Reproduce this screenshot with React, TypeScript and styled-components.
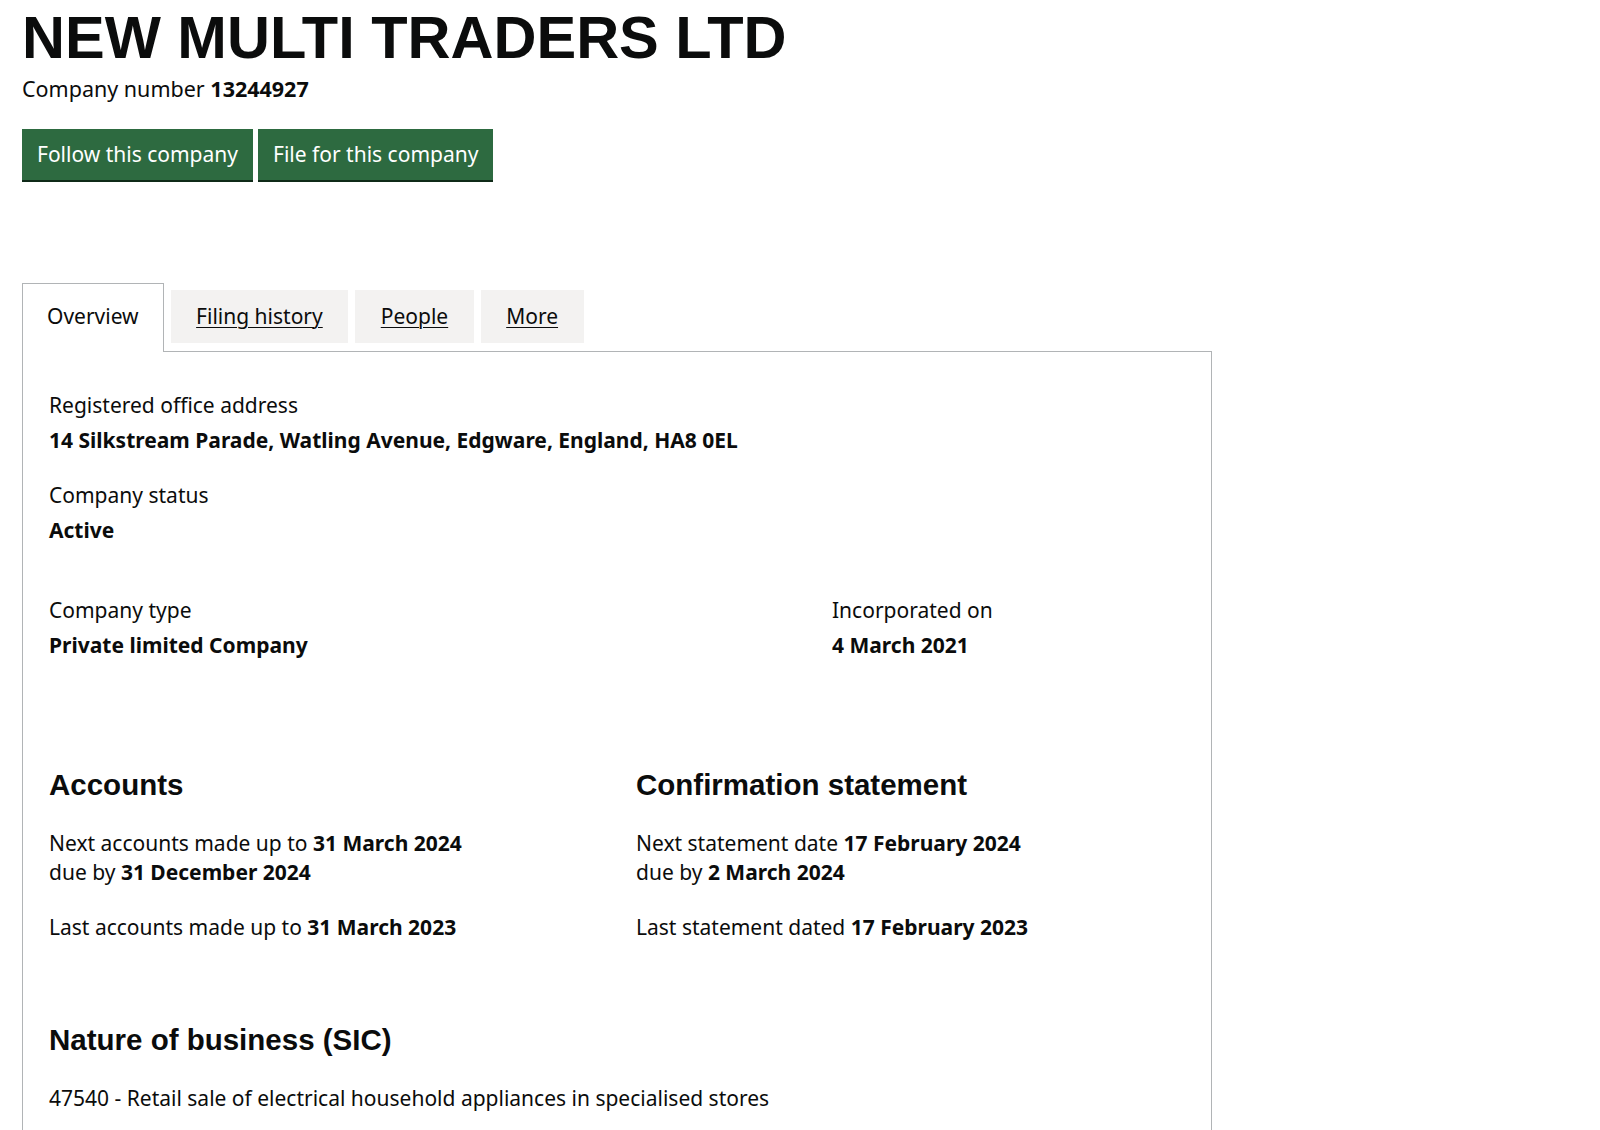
import styled, { createGlobalStyle } from 'styled-components';

const GlobalStyle = createGlobalStyle`
  body {
    margin: 0;
    background: #ffffff;
    color: #0b0c0c;
    font-family: 'Noto Sans', 'Open Sans', Arial, sans-serif;
  }
`;

const Page = styled.div`
  padding: 0 22px;
`;

const Title = styled.h1`
  margin: 8px 0 0;
  font-family: 'Liberation Sans', Arial, sans-serif;
  font-weight: 700;
  font-size: 59.5px;
  line-height: 1;
`;

const CompanyNumber = styled.p`
  margin: 8px 0 0;
  font-size: 21.5px;
  line-height: 25px;

  strong {
    font-weight: 700;
  }
`;

const ButtonRow = styled.div`
  display: flex;
  gap: 5px;
  margin-top: 28px;
`;

const GreenButton = styled.button`
  font-family: inherit;
  font-size: 21px;
  line-height: 25px;
  padding: 13px 15px;
  color: #ffffff;
  background: #2d6a40;
  border: none;
  border-radius: 0;
  box-shadow: 0 2px 0 #0f2a18;
  cursor: pointer;
`;

const TabList = styled.ul`
  display: flex;
  align-items: flex-start;
  list-style: none;
  margin: 103px 0 -1px;
  padding: 0;
  width: 1190px;
`;

const Tab = styled.li<{ $active?: boolean }>`
  position: relative;
  z-index: 1;
  font-size: 21px;
  line-height: 25px;
  margin-right: 7px;
  ${({ $active }) =>
    $active
      ? `
    background: #ffffff;
    border: 1px solid #b1b4b6;
    border-bottom: none;
    padding: 20px 24px 23px;
  `
      : `
    background: #f3f2f1;
    margin-top: 7px;
    padding: 14px 25.5px;
  `}
`;

const TabLink = styled.a`
  color: #0b0c0c;
  text-decoration: underline;
  text-underline-offset: 3px;
  text-decoration-thickness: 1px;
`;

const Panel = styled.div`
  width: 1190px;
  box-sizing: border-box;
  border: 1px solid #b1b4b6;
  padding: 41px 26px 60px;
`;

const Field = styled.dl<{ $after?: number }>`
  margin: 0 0 ${({ $after }) => $after ?? 30}px;
`;

const Label = styled.dt`
  font-size: 21px;
  line-height: 25px;
  margin-bottom: 10px;
`;

const Value = styled.dd`
  margin: 0;
  font-size: 21px;
  line-height: 25px;
  font-weight: 700;
`;

const Columns = styled.div<{ $first: string; $after?: number }>`
  display: grid;
  grid-template-columns: ${({ $first }) => $first} 1fr;
  margin-bottom: ${({ $after }) => $after ?? 0}px;
`;

const Heading = styled.h2`
  margin: 0 0 27px;
  font-family: 'Liberation Sans', Arial, sans-serif;
  font-weight: 700;
  font-size: 29.5px;
  line-height: 35px;
`;

const Text = styled.p<{ $after?: number }>`
  margin: 0 0 ${({ $after }) => $after ?? 0}px;
  font-size: 21px;
  line-height: 29px;

  strong {
    font-weight: 700;
  }
`;

const App = () => {
  return (
    <>
      <GlobalStyle />
      <Page>
        <Title>NEW MULTI TRADERS LTD</Title>
        <CompanyNumber>
          Company number <strong>13244927</strong>
        </CompanyNumber>
        <ButtonRow>
          <GreenButton>Follow this company</GreenButton>
          <GreenButton>File for this company</GreenButton>
        </ButtonRow>

        <TabList>
          <Tab $active>Overview</Tab>
          <Tab>
            <TabLink href="#">Filing history</TabLink>
          </Tab>
          <Tab>
            <TabLink href="#">People</TabLink>
          </Tab>
          <Tab>
            <TabLink href="#">More</TabLink>
          </Tab>
        </TabList>

        <Panel>
          <Field>
            <Label>Registered office address</Label>
            <Value>14 Silkstream Parade, Watling Avenue, Edgware, England, HA8 0EL</Value>
          </Field>
          <Field $after={55}>
            <Label>Company status</Label>
            <Value>Active</Value>
          </Field>
          <Columns $first="783px" $after={109}>
            <Field $after={0}>
              <Label>Company type</Label>
              <Value>Private limited Company</Value>
            </Field>
            <Field $after={0}>
              <Label>Incorporated on</Label>
              <Value>4 March 2021</Value>
            </Field>
          </Columns>

          <Columns $first="587px" $after={80}>
            <div>
              <Heading>Accounts</Heading>
              <Text $after={26}>
                Next accounts made up to <strong>31 March 2024</strong>
                <br />
                due by <strong>31 December 2024</strong>
              </Text>
              <Text>
                Last accounts made up to <strong>31 March 2023</strong>
              </Text>
            </div>
            <div>
              <Heading>Confirmation statement</Heading>
              <Text $after={26}>
                Next statement date <strong>17 February 2024</strong>
                <br />
                due by <strong>2 March 2024</strong>
              </Text>
              <Text>
                Last statement dated <strong>17 February 2023</strong>
              </Text>
            </div>
          </Columns>

          <Heading>Nature of business (SIC)</Heading>
          <Text>47540 - Retail sale of electrical household appliances in specialised stores</Text>
        </Panel>
      </Page>
    </>
  );
};

export default App;
